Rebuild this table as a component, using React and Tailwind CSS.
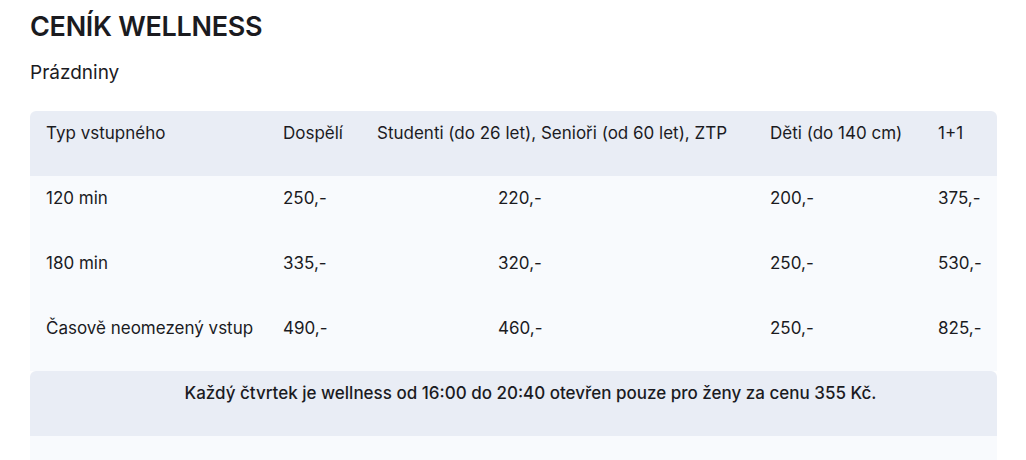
const rows = [
  { name: "120 min", adult: "250,-", student: "220,-", kid: "200,-", pair: "375,-" },
  { name: "180 min", adult: "335,-", student: "320,-", kid: "250,-", pair: "530,-" },
  { name: "Časově neomezený vstup", adult: "490,-", student: "460,-", kid: "250,-", pair: "825,-" },
];

const cols = "grid grid-cols-[237px_94px_393px_168px_75px]";

export default function App() {
  return (
    <div className="min-h-screen bg-white pl-[30px] pt-[9px] font-['Inter',sans-serif] text-[#1b1b1f]">
      <h1 className="text-[27px] font-semibold leading-[36px] tracking-[-0.3px]">CENÍK WELLNESS</h1>
      <h2 className="mt-[14px] text-[19px] leading-[28px]">Prázdniny</h2>

      <div className="mt-[24px] w-[967px] text-[17px] leading-[24px]">
        <div className={`${cols} h-[65px] rounded-t-md bg-[#e9edf5] pt-[10px]`}>
          <div className="px-4">Typ vstupného</div>
          <div className="px-4">Dospělí</div>
          <div className="px-4 whitespace-nowrap">Studenti (do 26 let), Senioři (od 60 let), ZTP</div>
          <div className="px-4 whitespace-nowrap">Děti (do 140 cm)</div>
          <div className="px-4">1+1</div>
        </div>

        {rows.map((r) => (
          <div key={r.name} className={`${cols} h-[65px] bg-[#f8fafd] pt-[10px]`}>
            <div className="px-4 whitespace-nowrap">{r.name}</div>
            <div className="px-4">{r.adult}</div>
            <div className="pl-[137px]">{r.student}</div>
            <div className="px-4">{r.kid}</div>
            <div className="px-4">{r.pair}</div>
          </div>
        ))}

        <div className="h-[65px] rounded-t-md bg-[#e9edf5] pt-[10px] pl-[34px] text-center font-medium">
          Každý čtvrtek je wellness od 16:00 do 20:40 otevřen pouze pro ženy za cenu 355 Kč.
        </div>
        <div className="h-[30px] bg-[#f8fafd]"></div>
      </div>
    </div>
  );
}
